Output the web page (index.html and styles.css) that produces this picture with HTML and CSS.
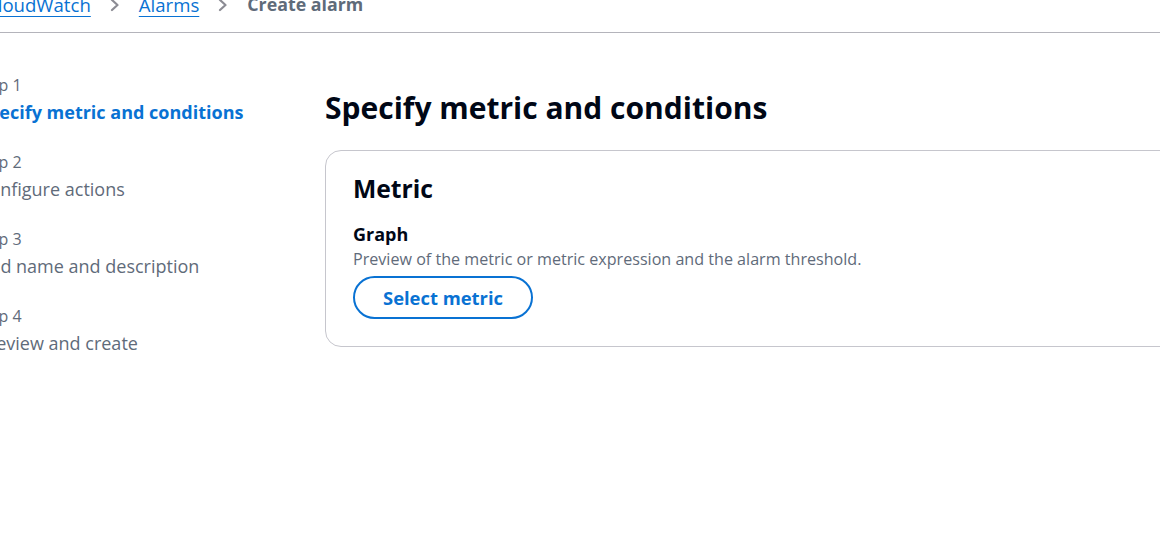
FILE: index.html
```html
<!DOCTYPE html>
<html>
<head>
<meta charset="utf-8">
<link rel="stylesheet" href="styles.css">
</head>
<body>
<div class="page">
  <nav class="breadcrumbs">
    <a class="crumb-link" href="#">CloudWatch</a>
    <svg class="chev" width="14" height="16" viewBox="0 0 14 16"><path d="M4 3 L9.5 8 L4 13" fill="none" stroke="#8c8c94" stroke-width="2.2" stroke-linejoin="round" stroke-linecap="round"/></svg>
    <a class="crumb-link" href="#">Alarms</a>
    <svg class="chev" width="14" height="16" viewBox="0 0 14 16"><path d="M4 3 L9.5 8 L4 13" fill="none" stroke="#8c8c94" stroke-width="2.2" stroke-linejoin="round" stroke-linecap="round"/></svg>
    <span class="crumb-current">Create alarm</span>
  </nav>
  <div class="layout">
    <ol class="steps">
      <li class="step">
        <div class="step-num">Step 1</div>
        <div class="step-title active">Specify metric and conditions</div>
      </li>
      <li class="step">
        <div class="step-num">Step 2</div>
        <div class="step-title">Configure actions</div>
      </li>
      <li class="step">
        <div class="step-num">Step 3</div>
        <div class="step-title">Add name and description</div>
      </li>
      <li class="step">
        <div class="step-num">Step 4</div>
        <div class="step-title">Preview and create</div>
      </li>
    </ol>
    <main class="content">
      <h1 class="page-title">Specify metric and conditions</h1>
      <section class="card">
        <h2 class="card-title">Metric</h2>
        <div class="field-label">Graph</div>
        <div class="field-desc">Preview of the metric or metric expression and the alarm threshold.</div>
        <button class="btn">Select metric</button>
      </section>
    </main>
  </div>
</div>
</body>
</html>
```
FILE: styles.css
```css
html, body {
  margin: 0;
  padding: 0;
  background: #ffffff;
  overflow: hidden;
}
body {
  font-family: "Open Sans", "Noto Sans", sans-serif;
  color: #000716;
  width: 1160px;
  height: 533px;
}
.page {
  margin-left: -22px;
  margin-top: -8px;
  width: 1320px;
}
.breadcrumbs {
  display: flex;
  align-items: center;
  gap: 17px;
  line-height: 25px;
  padding-bottom: 15px;
  border-bottom: 1px solid #b4b4bb;
  font-size: 18.6px;
  padding-left: 8px;
}
.crumb-link {
  color: #0972d3;
  text-decoration: underline;
  text-decoration-thickness: 1px;
  text-underline-offset: 4px;
}
.crumb-current {
  color: #5f6b7a;
  font-weight: 700;
  font-size: 17.8px;
}
.chev { flex: none; }
.layout {
  display: flex;
  padding-top: 41px;
}
.steps {
  list-style: none;
  margin: 0;
  padding: 0;
  width: 347px;
  flex: none;
  display: flex;
  flex-direction: column;
  gap: 26px;
}
.step-num {
  font-size: 16px;
  line-height: 23px;
  color: #5f6b7a;
  margin-left: -3px;
}
.step-title {
  font-size: 18px;
  line-height: 25px;
  margin-top: 3px;
  color: #5f6b7a;
}
.step-title.active {
  color: #0972d3;
  font-weight: 700;
  font-size: 18px;
}
.content {
  flex: 1;
}
.page-title {
  margin: 0;
  font-size: 30px;
  line-height: 36px;
  font-weight: 700;
  padding-top: 16px;
  padding-bottom: 24px;
}
.card {
  border: 1px solid #c6c6cd;
  border-radius: 16px;
  padding: 23px 27px 27px;
}
.card-title {
  margin: 0 0 18px;
  font-size: 24.7px;
  line-height: 30px;
  font-weight: 700;
}
.field-label {
  font-size: 18px;
  line-height: 25px;
  font-weight: 700;
}
.field-desc {
  font-size: 16.13px;
  line-height: 23px;
  color: #5f6b7a;
  margin-top: 1px;
  margin-bottom: 5px;
}
.btn {
  display: block;
  font-family: inherit;
  font-size: 18.4px;
  font-weight: 700;
  color: #0972d3;
  background: #ffffff;
  border: 2px solid #0972d3;
  border-radius: 22px;
  height: 43px;
  padding: 0 28px;
}
```
